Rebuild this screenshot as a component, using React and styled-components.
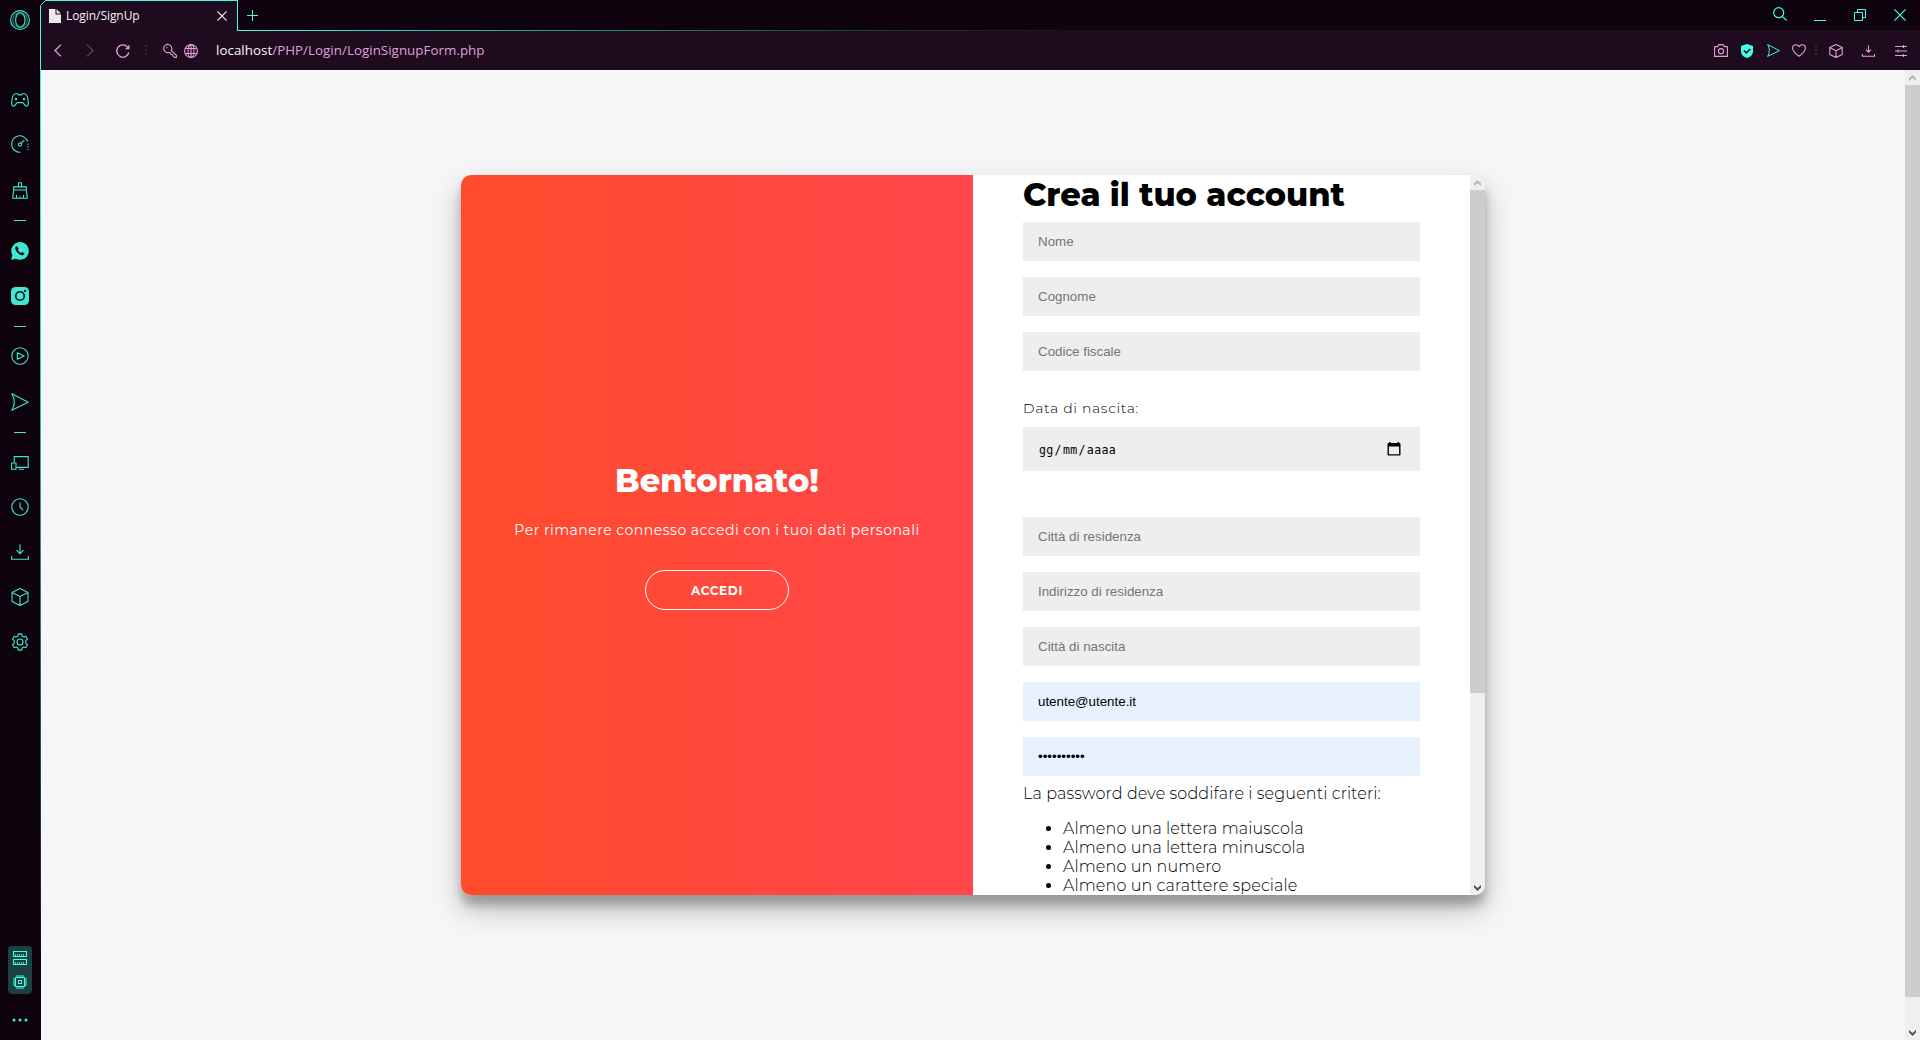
import React from "react";
import styled, { createGlobalStyle } from "styled-components";

const TEAL = "#3fe8d0";
const BRIGHT = "#40ffe5";
const PINK = "#dfa2d8";

const GlobalStyle = createGlobalStyle`
  *, *::before, *::after { box-sizing: border-box; }
  html, body { margin: 0; height: 100%; overflow: hidden; }
  #root { height: 100vh; }
`;

const Browser = styled.div`
  display: grid;
  grid-template-columns: 40px 1px minmax(0, 1fr);
  height: 100vh;
  background: #0f030d;
  font-family: "Open Sans", "Noto Sans", sans-serif;
`;

const Sidebar = styled.nav`
  display: flex;
  flex-direction: column;
  align-items: center;
  padding-top: 8px;
`;

const SideItem = styled.div`
  display: flex;
  align-items: center;
  justify-content: center;
  flex: none;
  width: 24px;
  height: 24px;
  margin-top: ${(p) => p.$gap}px;
`;

const Divider = styled.div`
  flex: none;
  width: 12px;
  height: 1px;
  margin-top: ${(p) => p.$gap}px;
  background: ${TEAL};
`;

const Monitor = styled.div`
  display: flex;
  flex-direction: column;
  align-items: center;
  justify-content: space-between;
  width: 24px;
  height: 48px;
  margin-top: auto;
  padding: 5px 0;
  border-radius: 4px;
  background: #1d4040;
`;

const MoreItem = styled(SideItem)`
  margin: 14px 0 8px;
`;

const Edge = styled.div`
  background: linear-gradient(to bottom, ${BRIGHT} 0, #38d8c4 320px, #216b62 660px, #10262a 900px, #0f030d 960px);
  margin-top: 6px;
`;

const Main = styled.div`
  display: flex;
  flex-direction: column;
  min-width: 0;
`;

const TabStrip = styled.div`
  display: flex;
  height: 31px;
  flex: none;
`;

const Tab = styled.div`
  position: relative;
  display: flex;
  align-items: center;
  width: 197px;
  padding: 0 10px 0 8px;
  background: #1f0b1e;
  border-top: 1px solid ${BRIGHT};
  border-right: 1px solid ${BRIGHT};
`;

const TabCorner = styled.svg`
  position: absolute;
  left: -1px;
  top: -1px;
`;

const TabTitle = styled.span`
  flex: 1;
  margin-left: 5px;
  color: #f6f0f6;
  font-size: 12px;
  line-height: 28px;
  letter-spacing: -0.06px;
  white-space: nowrap;
`;

const StripRest = styled.div`
  display: flex;
  flex: 1;
  border-bottom: 1px solid;
  border-image: linear-gradient(to right, ${BRIGHT} 0, #2a9d90 300px, #1a3b40 640px, #1f0b1e 860px) 1;
`;

const Slot = styled.div`
  display: flex;
  align-items: center;
  justify-content: center;
  flex: none;
  width: ${(p) => p.$w}px;
  height: 100%;
  margin-left: ${(p) => p.$ml || 0}px;
  padding-bottom: ${(p) => p.$pb || 0}px;
`;

const Spacer = styled.div`
  flex: 1;
`;

const Toolbar = styled.div`
  display: flex;
  align-items: center;
  height: 39px;
  flex: none;
  background: #1f0b1e;
`;

const Address = styled.div`
  margin-left: 14px;
  padding-bottom: 2px;
  color: ${PINK};
  font-size: 13.33px;
  line-height: 20px;
  letter-spacing: 0.04px;
  white-space: nowrap;
`;

const Host = styled.span`
  color: #fdf6fd;
`;

const Viewport = styled.div`
  display: flex;
  flex: 1;
  min-height: 0;
  background: #f6f5f7;
`;

const Page = styled.main`
  display: flex;
  flex: 1;
  justify-content: center;
  align-items: flex-start;
  padding-top: 105px;
`;

const ScrollTrack = styled.div`
  display: flex;
  flex-direction: column;
  flex: none;
  width: 15px;
  background: #efefef;
`;

const ScrollArrow = styled.div`
  display: flex;
  align-items: center;
  justify-content: center;
  height: 15px;
  flex: none;
`;

const ScrollThumb = styled.div`
  height: ${(p) => p.$h}px;
  margin-bottom: auto;
  background: #cdcdcd;
`;

const Card = styled.section`
  display: flex;
  width: 1024px;
  height: 720px;
  overflow: hidden;
  border-radius: 10px;
  background: #fff;
  box-shadow: 0 14px 28px rgba(0, 0, 0, 0.25), 0 10px 10px rgba(0, 0, 0, 0.22);
`;

const Welcome = styled.div`
  display: flex;
  flex-direction: column;
  align-items: center;
  width: 512px;
  padding-top: 286px;
  color: #fff;
  font-family: Montserrat, Inter, sans-serif;
  background: linear-gradient(to right, #ff4b2b, #ff464c);
`;

const Heading = styled.h1`
  margin: 0;
  font-family: Montserrat, Inter, sans-serif;
  font-size: 32px;
  font-weight: 800;
  line-height: 39px;
  white-space: nowrap;
`;

const FormHeading = styled(Heading)`
  margin-bottom: 8px;
`;

const Lead = styled.p`
  margin: 20px 0 30px;
  font-size: 14px;
  font-weight: 400;
  line-height: 20px;
  letter-spacing: 0.5px;
  white-space: nowrap;
`;

const GhostButton = styled.button`
  width: 144px;
  height: 40px;
  padding: 0;
  border: 1px solid #fff;
  border-radius: 20px;
  background: transparent;
  color: #fff;
  font-family: Montserrat, Inter, sans-serif;
  font-size: 12px;
  font-weight: 700;
  letter-spacing: 0.7px;
`;

const FormPanel = styled.div`
  display: flex;
  flex-direction: column;
  width: 497px;
  height: 720px;
  padding: 0 50px;
  overflow: hidden;
  color: #000;
  font-family: Montserrat, Inter, sans-serif;
`;

const Field = styled.div`
  display: flex;
  align-items: center;
  flex: none;
  height: ${(p) => p.$h || 39}px;
  margin-bottom: ${(p) => (p.$mb === undefined ? 16 : p.$mb)}px;
  padding: 0 15px;
  background: ${(p) => (p.$filled ? "#e8f0fe" : "#eee")};
  color: ${(p) => (p.$filled ? "#000" : "#757575")};
  font-family: "Liberation Sans", Arial, sans-serif;
  font-size: 13.333px;
`;

const Label = styled.label`
  flex: none;
  height: 56px;
  padding-top: 27px;
  font-size: 14px;
  font-weight: 350;
  line-height: 20px;
  letter-spacing: 0.68px;
`;

const DateText = styled.span`
  flex: 1;
  display: flex;
  padding-top: 2px;
  color: #000;
  font-family: "DejaVu Sans Mono", monospace;
  font-size: 11.6px;
  letter-spacing: 0.32px;
`;

const DatePart = styled.span`
  padding: 0 1px;
`;

const Hint = styled.p`
  flex: none;
  margin: 8px 0 16px;
  font-size: 16px;
  font-weight: 350;
  line-height: 19px;
  letter-spacing: 0.12px;
  white-space: nowrap;
`;

const Rules = styled.ul`
  flex: none;
  margin: 0;
  padding-left: 40px;
  font-size: 16px;
  font-weight: 350;
  line-height: 19px;
  letter-spacing: 0.12px;
  white-space: nowrap;
`;

const Svg = styled.svg`
  display: block;
  flex: none;
  overflow: visible;
`;

const CalendarSvg = styled(Svg)`
  margin-right: 4px;
`;

function Icon({ w = 18, h = w, color = TEAL, sw = 1.1, children }) {
  return (
    <Svg
      width={w}
      height={h}
      viewBox={`0 0 ${w} ${h}`}
      fill="none"
      stroke={color}
      strokeWidth={sw}
      strokeLinejoin="round"
    >
      {children}
    </Svg>
  );
}

const Opera = () => (
  <Icon w={20}>
    <circle cx="10" cy="10" r="9.4" />
    <circle cx="10" cy="10" r="7.3" opacity=".55" />
    <ellipse cx="10.3" cy="10" rx="4.7" ry="7.3" />
  </Icon>
);
const Gamepad = () => (
  <Icon w={18} h={14}>
    <path d="M4.6.8h2l1 1.1h2.8l1-1.1h2c2 0 3.1 2.6 3.7 6.2.5 3.4.4 6.2-1.6 6.2S12.9 9.6 11.6 9.6H6.400C5.100 9.600 4.500 13.200 2.500 13.200S.4 10.400.9 7C1.500 3.400 2.600.8 4.600.8z" />
    <circle cx="5" cy="6" r=".7" fill={TEAL} />
    <circle cx="13" cy="6" r=".7" fill={TEAL} />
  </Icon>
);
const Gauge = () => (
  <Icon>
    <path d="M9.500 17.200A8.200 8.200 0 1 1 16.600 6.500" />
    <path d="M16.900 8.500v6.500" strokeDasharray="1.2 1.600" />
    <circle cx="9" cy="9.500" r="1.600" />
    <path d="M10.100 8.400l3.200-3.300" />
  </Icon>
);
const Broom = () => (
  <Icon w={16} h={17}>
    <path d="M6.500 4.800V.7h3v4.100M1.700 8V4.900h12.600V8M1.700 8h12.600l1 8.300H.7L1.700 8zM4.500 16.300v-3.500M8 16.300v-2M11.500 16.300v-3.500" />
  </Icon>
);
const Whatsapp = () => (
  <Icon>
    <path d="M9.100 0A8.900 8.900 0 0 0 1.400 13.300L.1 18l4.700-1.200A8.900 8.900 0 1 0 9.100 0z" fill={TEAL} stroke="none" />
    <path d="M6.300 4.500c-.3-.4-.9-.3-1.300.1C3.700 5.900 4.200 8 6.200 10.300c2.400 2.800 4.900 3.700 6.500 2.500.7-.5.9-1.200.6-1.500l-2-1.200c-.7-.1-1 1-1.500.9-1-.3-2.700-1.900-3-2.900 0-.5.900-.9.800-1.400z" fill="#0f030d" stroke="none" />
  </Icon>
);
const Instagram = () => (
  <Icon>
    <rect width="18" height="18" rx="4.500" fill={TEAL} stroke="none" />
    <circle cx="9" cy="9" r="4.300" stroke="#0f030d" strokeWidth="1.600" />
    <circle cx="14" cy="3.900" r="1.100" fill="#0f030d" stroke="none" />
  </Icon>
);
const Player = () => (
  <Icon>
    <circle cx="9" cy="9" r="8.200" />
    <path d="M6.300 5.800l6.800 3.200-6.800 3.200z" />
  </Icon>
);
const Send = ({ size = 18, color, sw = 1.1 }) => (
  <Svg width={size} height={size} viewBox="0 0 18 18" fill="none" stroke={color} strokeWidth={(sw * 18) / size} strokeLinejoin="round">
    <path d="M.8.800L17.200 9.200.8 17.200C4 12 4 6 .8.800z" />
  </Svg>
);
const Devices = () => (
  <Icon w={18} h={14}>
    <path d="M3.200 6.500V.600h14v10.800H5.500M7.800 13.200h5" />
    <rect x=".6" y="7" width="4.400" height="6.200" />
  </Icon>
);
const Clock = () => (
  <Icon>
    <circle cx="9" cy="9" r="8.200" />
    <path d="M9 4.500V9l3.200 3.200" />
  </Icon>
);
const Download = ({ color = TEAL, w = 18, h = 16 }) => (
  <Svg width={w} height={h} viewBox="0 0 18 16" fill="none" stroke={color} strokeWidth={19.8 / w}>
    <path d="M9 .3v9.200M5.500 6.200L9 9.700l3.500-3.500M.6 12v3.200h16.800V12" />
  </Svg>
);
const Cube = ({ color = TEAL, size = 18 }) => (
  <Svg width={size} height={size} viewBox="0 0 18 18" fill="none" stroke={color} strokeWidth={19.8 / size} strokeLinejoin="round">
    <path d="M9 .6l8 4v8.800l-8 4-8-4V4.600zM1 4.600l8 4 8-4M9 8.600v8.800" />
  </Svg>
);
const Gear = () => (
  <Icon>
    <path d="M7.300.9h3.400l.4 2.200 1.600.9 2.100-.8 1.700 3-1.700 1.400v2.800l1.700 1.400-1.700 3-2.100-.8-1.600.9-.4 2.200H7.300l-.4-2.200-1.600-.9-2.100.8-1.700-3 1.700-1.400V7.600L1.500 6.200l1.700-3 2.100.8 1.600-.9z" />
    <circle cx="9" cy="9" r="3" />
  </Icon>
);
const Ram = () => (
  <Icon w={14} h={14} color={BRIGHT}>
    <rect x=".5" y=".5" width="13" height="5" />
    <rect x=".5" y="8.500" width="13" height="5" />
    <path d="M2 4h10M2 12h10" strokeDasharray="1 1" strokeWidth="2" opacity=".8" />
  </Icon>
);
const Chip = () => (
  <Icon w={14} h={14} color={BRIGHT}>
    <rect x="2.500" y="2.500" width="9" height="9" />
    <rect x="5.500" y="5.500" width="3" height="3" />
    <path d="M3.500 1h7M3.500 13h7" strokeDasharray="1 1" strokeWidth="2" />
    <path d="M1 3.500v7M13 3.500v7" strokeDasharray="1 1" strokeWidth="2" />
  </Icon>
);
const More = () => (
  <Icon w={16} h={4} color="none">
    <circle cx="2" cy="2" r="1.600" fill={TEAL} />
    <circle cx="8" cy="2" r="1.600" fill={TEAL} />
    <circle cx="14" cy="2" r="1.600" fill={TEAL} />
  </Icon>
);
const Dots = () => (
  <Icon w={2} h={11} color="none">
    <rect y="0" width="2" height="2" fill="#3d253c" />
    <rect y="4" width="2" height="2" fill="#3d253c" />
    <rect y="8" width="2" height="2" fill="#3d253c" />
  </Icon>
);
const FileIcon = () => (
  <Svg width="12" height="14" viewBox="0 0 12 14">
    <path d="M0 0h6.500v5.500H12V14H0zM7.500 0L12 4.500H7.500z" fill="#e9e9ee" />
  </Svg>
);
const Chevron = ({ dim }) => (
  <Icon w={8} h={13} color={dim ? "#5d3c5b" : PINK} sw={1.3}>
    <path d={dim ? "M1 .6l6 5.900-6 5.900" : "M7 .6L1 6.500l6 5.900"} strokeLinejoin="miter" />
  </Icon>
);
const Reload = () => (
  <Icon w={14} color={PINK} sw={1.4}>
    <path d="M12.800 8.500A6.100 6.100 0 1 1 11.300 2.800" />
    <path d="M13.500.8v4.400H9z" fill={PINK} stroke="none" />
  </Icon>
);
const Key = () => (
  <Icon w={14} color={PINK}>
    <path d="M8.300 6.500A4.100 4.100 0 1 0 6 8.400l1.600.6.500 1.500 1.400.3.800 1.600 1.200 1h1.900v-2z" />
    <circle cx="3.700" cy="3.700" r=".7" fill={PINK} stroke="none" />
  </Icon>
);
const Globe = () => (
  <Icon w={14} color={PINK}>
    <circle cx="7" cy="7" r="6.400" />
    <ellipse cx="7" cy="7" rx="3" ry="6.400" />
    <path d="M1.200 4.500h11.600M1.200 9.500h11.600M7 .6v12.800" />
  </Icon>
);
const Camera = () => (
  <Icon w={14} h={13} color={PINK}>
    <path d="M.6 2.600h3L4.800.6h4.400l1.200 2h3v9.800H.6z" />
    <circle cx="7" cy="7.200" r="2.600" />
  </Icon>
);
const Shield = () => (
  <Icon w={12} h={14} color="none">
    <path d="M6 0l6 2v5c0 4-2.800 6-6 7C2.800 13 0 11 0 7V2z" fill={BRIGHT} />
    <path d="M2.900 6.500l2.400 2.400L9.300 5" stroke="#1f0b1e" strokeWidth="1.500" />
  </Icon>
);
const Heart = () => (
  <Icon w={14} h={13} color={PINK}>
    <path d="M7 12.300C3 9.300.6 7 .6 4.200.6 2.200 2 .7 3.800.7 5.200.7 6.400 1.500 7 2.800 7.600 1.500 8.800.7 10.200.7c1.800 0 3.200 1.500 3.200 3.500C13.400 7 11 9.300 7 12.300z" />
  </Icon>
);
const Sliders = () => (
  <Icon w={12} h={12} color={PINK}>
    <path d="M0 1.500h12M0 6h12M0 10.500h12M8.500 0v3M3 4.500v3M8.500 9v3" />
  </Icon>
);
const Search = () => (
  <Icon w={14} color={BRIGHT} sw={1.2}>
    <circle cx="5.700" cy="5.700" r="5" />
    <path d="M9.300 9.300l4.400 4.400" />
  </Icon>
);
const Minimize = () => (
  <Icon w={12} h={12} color={BRIGHT} sw={1}>
    <path d="M0 11.500h12" />
  </Icon>
);
const Restore = () => (
  <Icon w={12} color={BRIGHT} sw={1}>
    <path d="M3.500 3.500v-3h8v8h-3M.5 3.500h8v8h-8z" strokeLinejoin="miter" />
  </Icon>
);
const Cross = ({ size = 12, color = BRIGHT }) => (
  <Icon w={size} color={color} sw={1.2}>
    <path d={`M.4.4L${size - 0.4} ${size - 0.4}M${size - 0.4}.4L.4 ${size - 0.4}`} />
  </Icon>
);
const Plus = () => (
  <Icon w={11} color={BRIGHT} sw={1}>
    <path d="M5.500 0v11M0 5.500h11" />
  </Icon>
);
const Caret = ({ up }) => (
  <Svg width="7" height="6" viewBox="0 0 7 6">
    <path d={up ? "M0 6V3.500L3.500 0 7 3.500V6L3.500 3z" : "M0 0v2.500L3.500 6 7 2.500V0L3.500 3z"} fill={up ? "#b5b5b5" : "#555"} />
  </Svg>
);
const Calendar = () => (
  <CalendarSvg width="14" height="14" viewBox="0 0 14 14">
    <path d="M2 0h1.500v1h7V0H12v1h.5q1 0 1 1v10.500q0 1-1 1h-11q-1 0-1-1V2q0-1 1-1H2zM1.900 4.500v7.700h10.200V4.500z" fill="#000" fillRule="evenodd" />
  </CalendarSvg>
);

function Scrollbar({ thumb }) {
  return (
    <ScrollTrack>
      <ScrollArrow><Caret up /></ScrollArrow>
      <ScrollThumb $h={thumb} />
      <ScrollArrow><Caret /></ScrollArrow>
    </ScrollTrack>
  );
}

const sideItems = [
  [0, <Opera />],
  [56, <Gamepad />],
  [20, <Gauge />],
  [22, <Broom />],
  [18],
  [18, <Whatsapp />],
  [21, <Instagram />],
  [18],
  [17, <Player />],
  [22, <Send color={TEAL} />],
  [18],
  [18, <Devices />],
  [20, <Clock />],
  [21, <Download />],
  [21, <Cube />],
  [21, <Gear />],
];

const rules = [
  "Almeno una lettera maiuscola",
  "Almeno una lettera minuscola",
  "Almeno un numero",
  "Almeno un carattere speciale",
];

export default function App() {
  return (
    <Browser>
      <GlobalStyle />
      <Sidebar>
        {sideItems.map(([gap, icon], i) =>
          icon ? <SideItem key={i} $gap={gap}>{icon}</SideItem> : <Divider key={i} $gap={gap} />
        )}
        <Monitor>
          <Ram />
          <Chip />
        </Monitor>
        <MoreItem><More /></MoreItem>
      </Sidebar>
      <Edge />
      <Main>
        <TabStrip>
          <Tab>
            <TabCorner width="7" height="7" viewBox="0 0 7 7">
              <path d="M0 0h6L0 6z" fill="#0f030d" />
              <path d="M.5 7V5.500L5.500.5H7" fill="none" stroke={BRIGHT} />
            </TabCorner>
            <FileIcon />
            <TabTitle>Login/SignUp</TabTitle>
            <Cross size={10} color="#f6f0f6" />
          </Tab>
          <StripRest>
            <Slot $w={29}><Plus /></Slot>
            <Spacer />
            <Slot $w={40} $pb={2}><Search /></Slot>
            <Slot $w={40}><Minimize /></Slot>
            <Slot $w={40}><Restore /></Slot>
            <Slot $w={40}><Cross /></Slot>
          </StripRest>
        </TabStrip>
        <Toolbar>
          <Slot $w={33}><Chevron /></Slot>
          <Slot $w={32}><Chevron dim /></Slot>
          <Slot $w={33}><Reload /></Slot>
          <Slot $w={13}><Dots /></Slot>
          <Slot $w={20} $ml={8}><Key /></Slot>
          <Slot $w={22}><Globe /></Slot>
          <Address><Host>localhost</Host>/PHP/Login/LoginSignupForm.php</Address>
          <Spacer />
          <Slot $w={20}><Camera /></Slot>
          <Slot $w={32}><Shield /></Slot>
          <Slot $w={21}><Send size={13} color={BRIGHT} sw={0.95} /></Slot>
          <Slot $w={30}><Heart /></Slot>
          <Slot $w={4}><Dots /></Slot>
          <Slot $w={36}><Cube size={14} color={PINK} /></Slot>
          <Slot $w={28}><Download w={13} h={12} color={PINK} /></Slot>
          <Slot $w={38}><Sliders /></Slot>
        </Toolbar>
        <Viewport>
          <Page>
            <Card>
              <Welcome>
                <Heading>Bentornato!</Heading>
                <Lead>Per rimanere connesso accedi con i tuoi dati personali</Lead>
                <GhostButton>ACCEDI</GhostButton>
              </Welcome>
              <FormPanel>
                <FormHeading>Crea il tuo account</FormHeading>
                <Field>Nome</Field>
                <Field>Cognome</Field>
                <Field $mb={0}>Codice fiscale</Field>
                <Label>Data di nascita:</Label>
                <Field $h={44} $mb={46}>
                  <DateText>
                    <DatePart>gg</DatePart>/<DatePart>mm</DatePart>/<DatePart>aaaa</DatePart>
                  </DateText>
                  <Calendar />
                </Field>
                <Field>Città di residenza</Field>
                <Field>Indirizzo di residenza</Field>
                <Field>Città di nascita</Field>
                <Field $filled>utente@utente.it</Field>
                <Field $filled $mb={0}>••••••••••</Field>
                <Hint>La password deve soddifare i seguenti criteri:</Hint>
                <Rules>
                  {rules.map((text) => <li key={text}>{text}</li>)}
                </Rules>
              </FormPanel>
              <Scrollbar thumb={503} />
            </Card>
          </Page>
          <Scrollbar thumb={912} />
        </Viewport>
      </Main>
    </Browser>
  );
}
